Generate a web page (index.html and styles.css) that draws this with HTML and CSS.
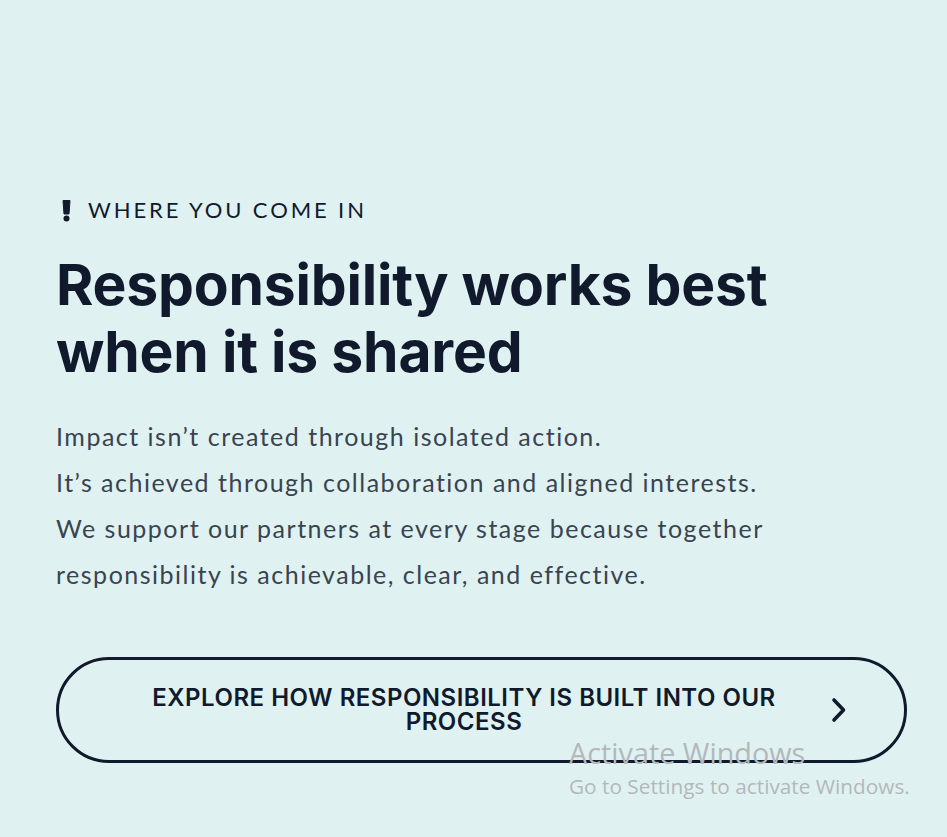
FILE: index.html
```html
<!DOCTYPE html>
<html lang="en">
<head>
<meta charset="utf-8">
<title>Where you come in</title>
<link rel="stylesheet" href="styles.css">
</head>
<body>
<main class="section">
  <div class="content">
    <p class="eyebrow"><svg class="bang" viewBox="0 0 9 23" width="9" height="23" aria-hidden="true"><path d="M1 1.5h7l-1 13.5h-5z" fill="currentColor" stroke="currentColor" stroke-width="1" stroke-linejoin="round"/><circle cx="4.5" cy="19.5" r="3" fill="currentColor"/></svg>WHERE YOU COME IN</p>
    <h1 class="title">Responsibility works best<br>when it is shared</h1>
    <div class="copy">
      <p>Impact isn’t created through isolated action.</p>
      <p>It’s achieved through collaboration and aligned interests.</p>
      <p>We support our partners at every stage because together<br>responsibility is achievable, clear, and effective.</p>
    </div>
    <a class="cta" href="#">
      <span class="cta-text">EXPLORE HOW RESPONSIBILITY IS BUILT INTO OUR PROCESS</span>
      <svg class="cta-icon" viewBox="0 0 16 26" width="16" height="26" aria-hidden="true"><path d="M3 3l9.5 10-9.5 10" fill="none" stroke="currentColor" stroke-width="3.6" stroke-linecap="round" stroke-linejoin="round"/></svg>
    </a>
  </div>
</main>
<div class="watermark">
  <div class="wm-title">Activate Windows</div>
  <div class="wm-sub">Go to Settings to activate Windows.</div>
</div>
</body>
</html>
```

FILE: styles.css
```css
html, body {
  margin: 0;
  padding: 0;
  background: #dff2f1;
}
body {
  width: 947px;
  height: 837px;
  overflow: hidden;
  position: relative;
}
.section {
  padding: 194px 40px 0 56px;
}
.content {
  display: flex;
  flex-direction: column;
}
.eyebrow {
  margin: 0;
  display: flex;
  align-items: center;
  font-family: "Lato", sans-serif;
  font-size: 22px;
  line-height: 32px;
  letter-spacing: 2.9px;
  color: #111a2c;
}
.bang {
  flex: none;
  margin: 0 17px 0 6px;
  color: #111a2c;
}
.title {
  margin: 25px 0 0;
  font-family: "Inter", sans-serif;
  font-weight: 700;
  font-size: 57px;
  line-height: 67px;
  letter-spacing: -0.2px;
  color: #111a2c;
}
.copy {
  margin-top: 28px;
  font-family: "Lato", sans-serif;
  font-size: 25px;
  line-height: 46px;
  letter-spacing: 1.5px;
  color: #3a4350;
}
.copy p {
  margin: 0;
}
.cta {
  margin-top: 60px;
  width: 851px;
  height: 106px;
  box-sizing: border-box;
  border: 3px solid #111a2c;
  border-radius: 60px;
  display: flex;
  align-items: center;
  padding: 0 57px 0 65px;
  text-decoration: none;
  color: #111a2c;
}
.cta-text {
  flex: none;
  width: 680px;
  text-align: center;
  font-family: "Inter", sans-serif;
  font-weight: 600;
  font-size: 24px;
  line-height: 24px;
  letter-spacing: 0.5px;
}
.cta-icon {
  flex: none;
  margin-left: auto;
  color: #111a2c;
}
.watermark {
  position: absolute;
  left: 569px;
  top: 735px;
  font-family: "Open Sans", sans-serif;
  color: #b3b8ba;
}
.wm-title {
  font-size: 28.8px;
  line-height: 36px;
  font-weight: 400;
}
.wm-sub {
  font-size: 20.8px;
  line-height: 30px;
  font-weight: 400;
}
```
